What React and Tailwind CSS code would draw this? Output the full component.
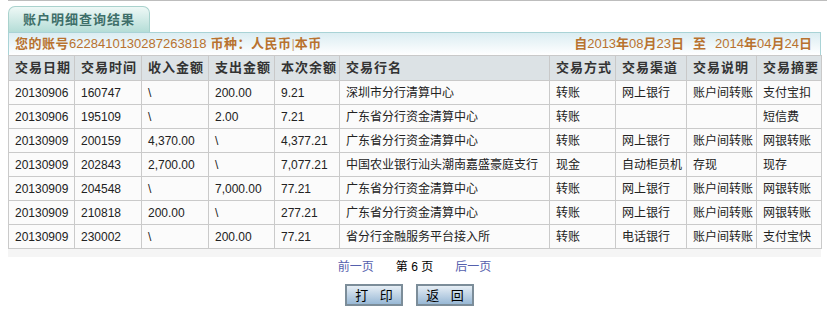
import React from 'react'

const columns = [
    { title: "交易日期", width: 66 },
    { title: "交易时间", width: 67 },
    { title: "收入金额", width: 67 },
    { title: "支出金额", width: 66 },
    { title: "本次余额", width: 65 },
    { title: "交易行名", width: 210 },
    { title: "交易方式", width: 66 },
    { title: "交易渠道", width: 71 },
    { title: "交易说明", width: 70 },
    { title: "交易摘要", width: 65 },
]

const rows = [
    ["20130906", "160747", "\\", "200.00", "9.21", "深圳市分行清算中心", "转账", "网上银行", "账户间转账", "支付宝扣"],
    ["20130906", "195109", "\\", "2.00", "7.21", "广东省分行资金清算中心", "转账", "", "", "短信费"],
    ["20130909", "200159", "4,370.00", "\\", "4,377.21", "广东省分行资金清算中心", "转账", "网上银行", "账户间转账", "网银转账"],
    ["20130909", "202843", "2,700.00", "\\", "7,077.21", "中国农业银行汕头潮南嘉盛豪庭支行", "现金", "自动柜员机", "存现", "现存"],
    ["20130909", "204548", "\\", "7,000.00", "77.21", "广东省分行资金清算中心", "转账", "网上银行", "账户间转账", "网银转账"],
    ["20130909", "210818", "200.00", "\\", "277.21", "广东省分行资金清算中心", "转账", "网上银行", "账户间转账", "网银转账"],
    ["20130909", "230002", "\\", "200.00", "77.21", "省分行金融服务平台接入所", "转账", "电话银行", "账户间转账", "支付宝快"],
]

const font = { fontFamily: '"Liberation Sans", "Noto Sans CJK SC", sans-serif' }

const App = () => {
    return (
        <div className="w-[827px] h-[325px] bg-white" style={font}>
            <div className="ml-2 h-px bg-[#bdbdbd]"></div>
            <div className="ml-2 mr-[6px] pt-[5px]">
                {/* tab */}
                <div className="w-[142px] h-[26px] rounded-t-[7px] border border-b-0 border-[#a9d2cd] bg-gradient-to-b from-[#eef8f6] to-[#b4ddd7] flex items-center pl-[14px] text-[13px] font-bold text-[#3e6f69] tracking-[1px]">
                    账户明细查询结果
                </div>

                {/* account info bar */}
                <div className="h-[23px] border border-[#a9d3d6] border-b-0 bg-gradient-to-b from-[#dbedf2] to-[#ffffff] flex items-center justify-between pl-[6px] pr-[8px] text-[13px] text-[#b8722f]">
                    <div>
                        <span className="font-bold tracking-[0.5px]">您的账号</span>
                        <span>6228410130287263818</span>
                        <span className="font-bold tracking-[0.5px] ml-1">币种：人民币</span>
                        <span className="text-[#c9a27a]">|</span>
                        <span className="font-bold tracking-[0.5px]">本币</span>
                    </div>
                    <div className="font-bold">
                        自<span className="font-normal">2013</span>年<span className="font-normal">08</span>月<span className="font-normal">23</span>日
                        <span className="ml-[9px] mr-[9px]">至</span>
                        <span className="font-normal">2014</span>年<span className="font-normal">04</span>月<span className="font-normal">24</span>日
                    </div>
                </div>

                {/* table */}
                <table className="border-collapse table-fixed w-[813px]">
                    <colgroup>
                        {columns.map((c, i) => (
                            <col key={i} style={{ width: c.width }} />
                        ))}
                    </colgroup>
                    <thead>
                        <tr className="h-[25px] bg-[#dce2e5]">
                            {columns.map((c, i) => (
                                <th key={i} className="border border-[#c9c9c9] text-left pl-[6px] text-[13px] font-bold text-[#333] tracking-[1px] whitespace-nowrap">
                                    {c.title}
                                </th>
                            ))}
                        </tr>
                    </thead>
                    <tbody>
                        {rows.map((row, r) => (
                            <tr key={r} className="h-[24px] bg-[#fbfbfb]">
                                {row.map((cell, i) => (
                                    <td key={i} className="border border-[#cacaca] pl-[6px] text-[12px] text-[#222] whitespace-nowrap overflow-hidden">
                                        {cell}
                                    </td>
                                ))}
                            </tr>
                        ))}
                    </tbody>
                </table>
                <div className="h-[8px] bg-[#f5f5f5]"></div>

                {/* pagination */}
                <div className="flex justify-center items-center gap-[22px] h-[17px] mt-[1px] text-[12px]">
                    <span className="text-[#5560ad] cursor-pointer">前一页</span>
                    <span className="text-black">第 6 页</span>
                    <span className="text-[#5560ad] cursor-pointer">后一页</span>
                </div>

                {/* buttons */}
                <div className="flex justify-center gap-[13px] mt-[9px] pr-[10px]">
                    <button className="w-[58px] h-[22px] border-2 border-[#7c8d99] bg-gradient-to-b from-[#e6eef5] to-[#98b8d5] text-[13px] text-black tracking-[4px] pl-[4px]">
                        打 印
                    </button>
                    <button className="w-[58px] h-[22px] border-2 border-[#7c8d99] bg-gradient-to-b from-[#e6eef5] to-[#98b8d5] text-[13px] text-black tracking-[4px] pl-[4px]">
                        返 回
                    </button>
                </div>
            </div>
        </div>
    )
}

export default App
